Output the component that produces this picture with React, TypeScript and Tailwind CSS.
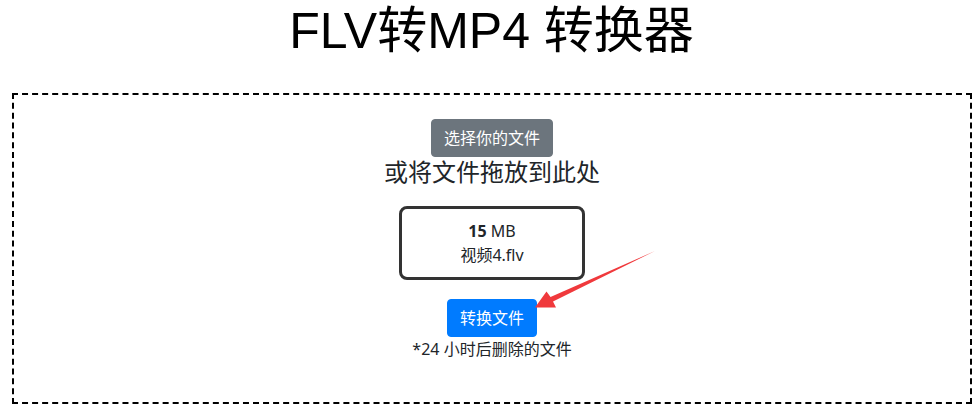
import React from "react";

const SANS = "font-['Noto_Sans','Noto_Sans_CJK_SC',sans-serif]";

export default function App() {
  return (
    <div className={`relative w-[979px] h-[416px] bg-white text-[#212529] ${SANS}`}>
      {/* Title */}
      <h1 className="pt-[2px] pl-[4px] text-center text-[50px] leading-[59px] font-normal text-black font-['Liberation_Sans','Noto_Sans_CJK_SC',sans-serif]">
        FLV转MP4 转换器
      </h1>

      {/* Drop zone */}
      <div className="mt-[32px] ml-[12px] w-[960px] h-[311px] border-2 border-dashed border-black flex flex-col items-center pt-[24px]">
        <button className="h-[38px] px-3 rounded border border-[#6c757d] bg-[#6c757d] text-white text-[16px] leading-[24px]">
          选择你的文件
        </button>
        <div className="text-[24px] leading-[29px]">或将文件拖放到此处</div>

        <div className="mt-[20px] w-[186px] h-[74px] border-[3px] border-[#333] rounded-[8px] flex flex-col items-center justify-center text-[16px] leading-[24px]">
          <div>
            <span className="font-bold">15</span> MB
          </div>
          <div>视频4.flv</div>
        </div>

        <button className="mt-[19px] h-[38px] px-3 rounded border border-[#007bff] bg-[#007bff] text-white text-[16px] leading-[24px]">
          转换文件
        </button>
        <div className="text-[16px] leading-[24px]">*24 小时后删除的文件</div>
      </div>

      {/* Annotation arrow */}
      <svg className="absolute left-0 top-0 pointer-events-none" width="979" height="416">
        <polygon
          points="655,251 553,301.5 556,307.5 535,307.5 546.5,291.5 550.5,297"
          fill="#f0393c"
        />
      </svg>
    </div>
  );
}
